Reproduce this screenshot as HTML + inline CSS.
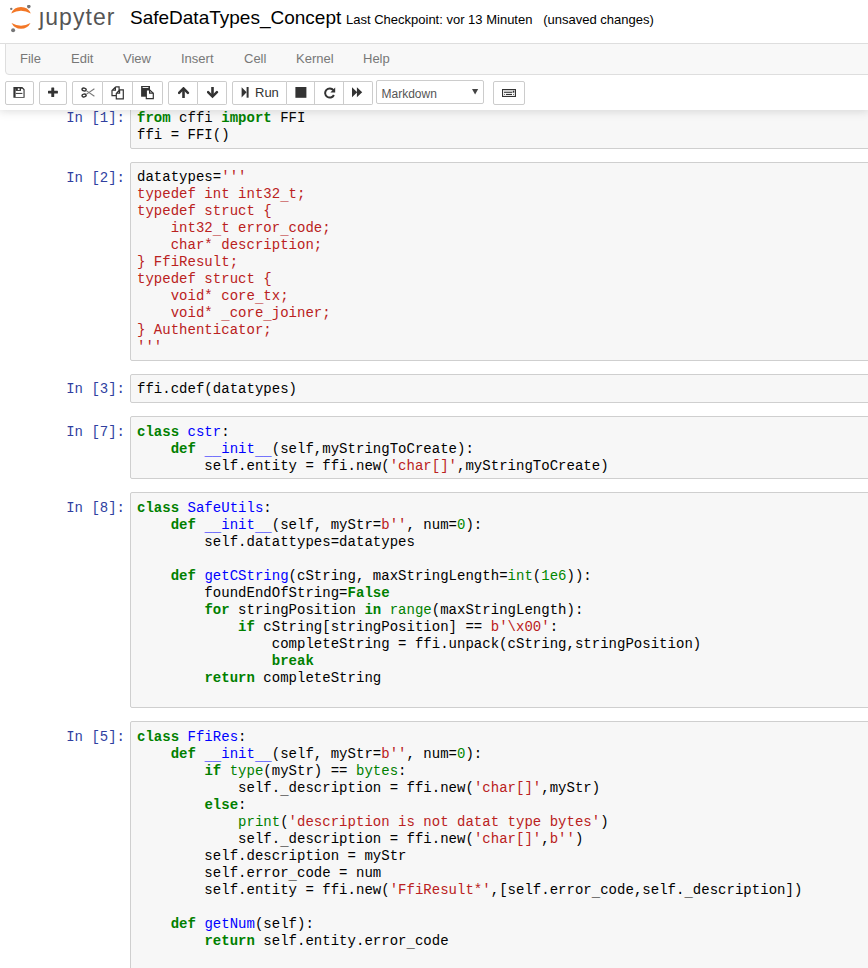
<!DOCTYPE html>
<html><head><meta charset="utf-8">
<style>
*{box-sizing:border-box;margin:0;padding:0}
html,body{width:868px;height:968px;overflow:hidden;background:#fff}
body{position:relative;font-family:"Liberation Sans",sans-serif;font-size:13px;color:#000}
.abs{position:absolute}
#logo{left:10px;top:5px}
#title{left:130px;top:7px;font-size:19px;white-space:nowrap;color:#000}
#ckpt{left:346px;top:12px;font-size:13px;white-space:nowrap;color:#000}
#menubar{left:5px;top:43px;width:900px;height:32px;background:#f8f8f8;border:1px solid #dedede;border-radius:0 0 4px 4px}
.mi{position:absolute;top:7px;color:#777;font-size:13px;line-height:15px}
.grp .b:first-child{border-left-width:1px;border-radius:2px 0 0 2px}
.grp .b:last-child{border-radius:0 2px 2px 0}
.grp .b svg,.btn svg{position:absolute}
#site{left:0;top:0;width:868px;height:968px}
.cell{position:absolute;left:130px;width:760px;border:1px solid #cfcfcf;border-radius:2px;background:#f7f7f7}
.prompt{position:absolute;right:743px;font-family:"Liberation Mono",monospace;font-size:14px;line-height:17px;color:#303f9f;white-space:pre}
pre{font-family:"Liberation Mono",monospace;font-size:14px;letter-spacing:0.02px;line-height:17px;color:#000;padding:6.6px 0 0 6px;white-space:pre}
.k{color:#008000;font-weight:bold}
.d{color:#00f}
.s{color:#ba2121}
.n{color:#080}
.bi{color:#008000}

#tbwrap{left:0;top:0;width:868px;height:110px;background:#fff;box-shadow:0 0 9px 1px rgba(87,87,87,0.22);z-index:5}
.headerbar{left:0;top:43px;width:868px;height:1px;background:#dedede}
.btn{position:absolute;top:81px;height:24px;border:1px solid #ccc;background:#fff;border-radius:2px}
.grp{position:absolute;top:81px;height:24px;display:flex}
.grp .b{height:24px;border:1px solid #ccc;border-left-width:0;background:#fff;position:relative}
.rt{position:absolute;left:22px;top:3px;font-size:13px;line-height:15px;color:#333}
.sel{left:376px;top:80px;width:108px;height:24px;border:1px solid #ccc;border-radius:2px;background:#fff}
.st{position:absolute;left:4.5px;top:6px;font-size:12px;line-height:14px;color:#555}
.hi pre{padding-top:6px}
.u{font-style:normal;position:relative;top:2px}
</style></head><body>
<div id="site" class="abs">
<!-- cells -->
<div class="prompt" style="top:110px">In [1]:</div>
<div class="cell hi" style="top:103px;height:46px"><pre><span class="k">from</span> cffi <span class="k">import</span> FFI
ffi = FFI()</pre></div>

<div class="prompt" style="top:170px">In [2]:</div>
<div class="cell hi" style="top:162px;height:199px"><pre>datatypes=<span class="s">'''
typedef int int32<i class="u">_</i>t;
typedef struct {
    int32<i class="u">_</i>t error<i class="u">_</i>code;
    char* description;
} FfiResult;
typedef struct {
    void* core<i class="u">_</i>tx;
    void* <i class="u">_</i>core<i class="u">_</i>joiner;
} Authenticator;
'''</span></pre></div>

<div class="prompt" style="top:381px">In [3]:</div>
<div class="cell hi" style="top:374px;height:29px"><pre>ffi.cdef(datatypes)</pre></div>

<div class="prompt" style="top:424px">In [7]:</div>
<div class="cell" style="top:416px;height:63px"><pre><span class="k">class</span> <span class="d">cstr</span>:
    <span class="k">def</span> <span class="d"><i class="u">_</i><i class="u">_</i>init<i class="u">_</i><i class="u">_</i></span>(self,myStringToCreate):
        self.entity = ffi.new(<span class="s">'char[]'</span>,myStringToCreate)</pre></div>

<div class="prompt" style="top:500px">In [8]:</div>
<div class="cell" style="top:492px;height:216px"><pre><span class="k">class</span> <span class="d">SafeUtils</span>:
    <span class="k">def</span> <span class="d"><i class="u">_</i><i class="u">_</i>init<i class="u">_</i><i class="u">_</i></span>(self, myStr=<span class="s">b''</span>, num=<span class="n">0</span>):
        self.datattypes=datatypes

    <span class="k">def</span> <span class="d">getCString</span>(cString, maxStringLength=<span class="bi">int</span>(<span class="n">1e6</span>)):
        foundEndOfString=<span class="k">False</span>
        <span class="k">for</span> stringPosition <span class="k">in</span> <span class="bi">range</span>(maxStringLength):
            <span class="k">if</span> cString[stringPosition] == <span class="s">b'\x00'</span>:
                completeString = ffi.unpack(cString,stringPosition)
                <span class="k">break</span>
        <span class="k">return</span> completeString
</pre></div>

<div class="prompt" style="top:729px">In [5]:</div>
<div class="cell" style="top:721px;height:300px"><pre><span class="k">class</span> <span class="d">FfiRes</span>:
    <span class="k">def</span> <span class="d"><i class="u">_</i><i class="u">_</i>init<i class="u">_</i><i class="u">_</i></span>(self, myStr=<span class="s">b''</span>, num=<span class="n">0</span>):
        <span class="k">if</span> <span class="bi">type</span>(myStr) == <span class="bi">bytes</span>:
            self.<i class="u">_</i>description = ffi.new(<span class="s">'char[]'</span>,myStr)
        <span class="k">else</span>:
            <span class="bi">print</span>(<span class="s">'description is not datat type bytes'</span>)
            self.<i class="u">_</i>description = ffi.new(<span class="s">'char[]'</span>,<span class="s">b''</span>)
        self.description = myStr
        self.error<i class="u">_</i>code = num
        self.entity = ffi.new(<span class="s">'FfiResult*'</span>,[self.error<i class="u">_</i>code,self.<i class="u">_</i>description])

    <span class="k">def</span> <span class="d">getNum</span>(self):
        <span class="k">return</span> self.entity.error<i class="u">_</i>code
</pre></div>
</div>

<!-- header -->
<svg id="logo" class="abs" style="z-index:7" width="110" height="30" viewBox="0 0 110 30">
  <path d="M1.2 8.4 A10.64 10.64 0 0 1 20.8 8.4 A20.46 20.46 0 0 0 1.2 8.4Z" fill="#f37726"/>
  <path d="M1.5 18 A10.68 10.68 0 0 0 20.5 18 A19.3 19.3 0 0 1 1.5 18Z" fill="#f37726"/>
  <circle cx="18.8" cy="1.6" r="1.8" fill="#767677"/>
  <circle cx="1.25" cy="3.85" r="1.2" fill="#767677"/>
  <circle cx="3.1" cy="25.2" r="2" fill="#767677"/>
  <text x="29" y="19.5" font-family="Liberation Sans" font-size="23" fill="#555" textLength="75.5" lengthAdjust="spacing">&#x237;upyter</text>
</svg>
<div id="title" class="abs" style="z-index:7">SafeDataTypes_Concept</div>
<div id="ckpt" class="abs" style="z-index:7">Last Checkpoint: vor 13 Minuten &nbsp; (unsaved changes)</div>

<div id="tbwrap" class="abs">
<div class="headerbar abs"></div>
<!-- save -->
<div class="btn" style="left:5px;width:29px"><svg style="left:7px;top:5px" width="13" height="12" viewBox="0 0 13 12">
<path d="M0.4 0 H9.3 L11.6 2.3 V10.8 H0.4 Z M2.6 1.8 V9.9 H10.5 V2.9 L9.4 1.8 Z" fill="#333" fill-rule="evenodd"/>
<rect x="2.6" y="1" width="5.4" height="2.9" fill="#333"/><rect x="4.8" y="1.4" width="1.8" height="1.6" fill="#fff"/>
<rect x="2.8" y="5.9" width="6.6" height="1" fill="#333"/>
</svg></div>
<!-- plus -->
<div class="btn" style="left:39px;width:28px"><svg style="left:8px;top:4.5px" width="11" height="11" viewBox="0 0 11 11">
<path d="M3.3 0.9 Q3.3 0.4 3.8 0.4 H5.7 Q6.2 0.4 6.2 0.9 V3.7 H9.4 Q9.9 3.7 9.9 4.2 V5.9 Q9.9 6.4 9.4 6.4 H6.2 V9.4 Q6.2 9.9 5.7 9.9 H3.8 Q3.3 9.9 3.3 9.4 V6.4 H0.5 Q0 6.4 0 5.9 V4.2 Q0 3.7 0.5 3.7 H3.3 Z" fill="#333"/>
</svg></div>
<!-- cut copy paste -->
<div class="grp" style="left:72px">
 <div class="b" style="width:31px"><svg style="left:8px;top:5px" width="15" height="12" viewBox="0 0 15 12">
 <ellipse cx="3.1" cy="2.5" rx="2.1" ry="1.45" fill="none" stroke="#333" stroke-width="1.4" transform="rotate(12 3.1 2.5)"/>
 <ellipse cx="3.1" cy="8.5" rx="2.1" ry="1.45" fill="none" stroke="#333" stroke-width="1.4" transform="rotate(-12 3.1 8.5)"/>
 <path d="M5.2 3.6 L13.4 9.3 M5.2 7.4 L13.4 1.7" stroke="#777" stroke-width="1.1" fill="none"/>
 </svg></div>
 <div class="b" style="width:30px"><svg style="left:8px;top:4px" width="14" height="15" viewBox="0 0 14 15">
 <path d="M4.6 0.9 H8.1 V4.2 M4.6 0.9 L1 4.4 V9.6 H5 M1.4 4.1 H4.4 V1.2" fill="none" stroke="#333" stroke-width="1.2"/>
 <path d="M8.6 3.9 H12.3 V12.8 H5.3 V7.4 Z M5.6 7.1 H8.6 V4.2" fill="#fff" stroke="#333" stroke-width="1.2"/>
 </svg></div>
 <div class="b" style="width:30px"><svg style="left:7px;top:4px" width="14" height="15" viewBox="0 0 14 15">
 <rect x="1.1" y="0" width="8.9" height="10.7" fill="#333"/><rect x="2.6" y="1" width="5.8" height="0.9" fill="#fff"/>
 <path d="M6.3 3.9 H9.6 L13.3 7.2 V12.6 H6.3 Z" fill="#fff" stroke="#333" stroke-width="1.2"/>
 <path d="M9.6 4 V7.2 H13.2" fill="none" stroke="#333" stroke-width="1.2"/>
 </svg></div>
</div>
<!-- up down -->
<div class="grp" style="left:168px">
 <div class="b" style="width:30px"><svg style="left:9px;top:5px" width="12" height="12" viewBox="0 0 12 12">
 <path d="M1.1 5.8 L5.5 1.4 L9.9 5.8" fill="none" stroke="#333" stroke-width="2.5" stroke-linecap="round"/>
 <path d="M5.5 2 V11" stroke="#333" stroke-width="2.6"/>
 </svg></div>
 <div class="b" style="width:29px"><svg style="left:9px;top:5px" width="12" height="12" viewBox="0 0 12 12">
 <path d="M1.1 5.2 L5.5 9.6 L9.9 5.2" fill="none" stroke="#333" stroke-width="2.5" stroke-linecap="round"/>
 <path d="M5.5 0 V9" stroke="#333" stroke-width="2.6"/>
 </svg></div>
</div>
<!-- run group -->
<div class="grp" style="left:232px">
 <div class="b" style="width:55px"><svg style="left:8px;top:5px" width="9" height="12" viewBox="0 0 9 12">
 <path d="M0.6 0.2 L5.6 5.35 L0.6 10.5 Z" fill="#333"/><rect x="5.6" y="0" width="2" height="10.7" fill="#333"/>
 </svg><span class="rt">Run</span></div>
 <div class="b" style="width:28px"><svg style="left:8px;top:5px" width="12" height="12" viewBox="0 0 12 12">
 <rect x="0.4" y="0" width="11" height="10.8" fill="#333"/>
 </svg></div>
 <div class="b" style="width:29px"><svg style="left:7.5px;top:4.5px" width="13" height="12" viewBox="0 0 13 12">
 <path d="M10.4 3.2 A4.6 4.6 0 1 0 10.9 8" fill="none" stroke="#333" stroke-width="2"/>
 <path d="M12.2 0.6 V5.4 H7.4 Z" fill="#333"/>
 </svg></div>
 <div class="b" style="width:29px"><svg style="left:7px;top:5px" width="13" height="12" viewBox="0 0 13 12">
 <path d="M1 0.2 L6.2 5.25 L1 10.3 Z M5.9 0.2 L11.2 5.25 L5.9 10.3 Z" fill="#333"/>
 </svg></div>
</div>
<!-- select -->
<div class="sel abs"><span class="st">Markdown</span><svg style="position:absolute;left:94.8px;top:7.9px" width="7" height="6" viewBox="0 0 7 6"><path d="M0 0 H6.2 L3.1 5.5 Z" fill="#444"/></svg></div>
<!-- keyboard -->
<div class="btn" style="left:493px;width:32px"><svg style="left:8px;top:7px" width="14" height="8" viewBox="0 0 14 8">
<rect x="0.55" y="0.55" width="12.9" height="6.9" fill="#fff" stroke="#333" stroke-width="1.1"/>
<rect x="2" y="1.7" width="8.3" height="0.9" fill="#999"/>
<rect x="10.8" y="1.6" width="1.5" height="2.1" fill="#333"/>
<rect x="2" y="3.1" width="8.3" height="0.9" fill="#444"/>
<rect x="2" y="4.9" width="1.1" height="1.1" fill="#777"/><rect x="11" y="4.9" width="1.1" height="1.1" fill="#777"/>
<rect x="4" y="4.9" width="6" height="1.1" fill="#333"/>
</svg></div>
</div>
<div id="menubar" class="abs" style="z-index:7">
  <span class="mi" style="left:14px">File</span>
  <span class="mi" style="left:65px">Edit</span>
  <span class="mi" style="left:117px">View</span>
  <span class="mi" style="left:175px">Insert</span>
  <span class="mi" style="left:238px">Cell</span>
  <span class="mi" style="left:290px">Kernel</span>
  <span class="mi" style="left:357px">Help</span>
</div>
</body></html>
